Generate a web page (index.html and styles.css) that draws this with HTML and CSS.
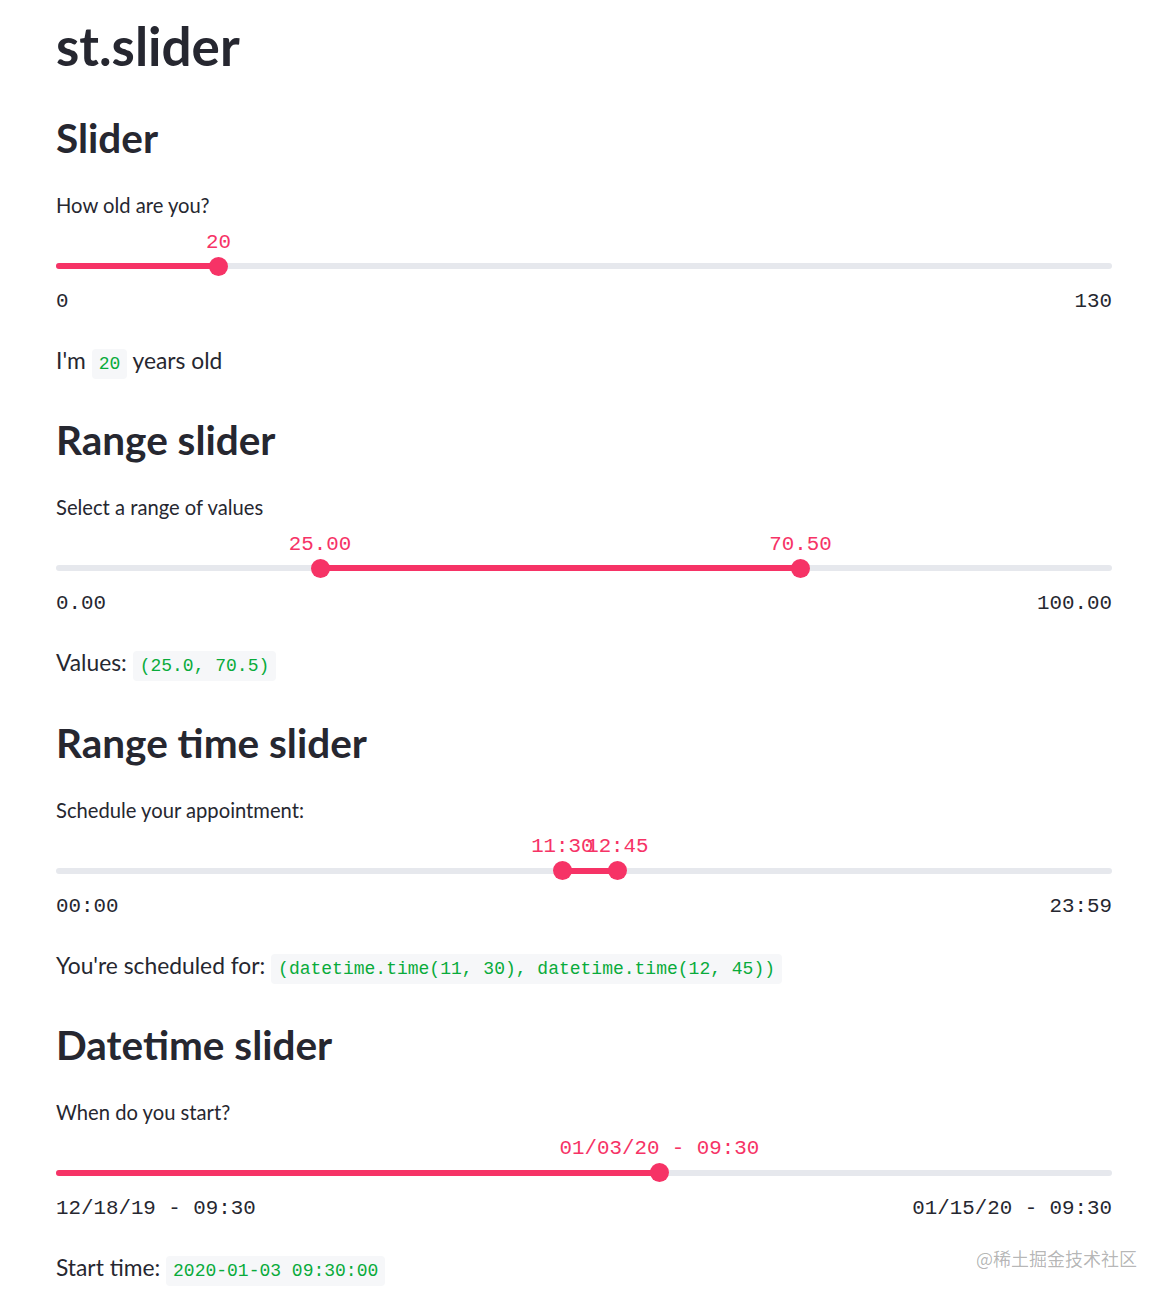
FILE: index.html
```html
<!DOCTYPE html>
<html lang="en">
<head>
  <meta charset="UTF-8" />
  <title>st.slider</title>
  <link rel="stylesheet" href="styles.css">
</head>
<body>

  <main class="page">
    <h1>st.slider</h1>

    <section class="block">
      <h2>Slider</h2>
      <div class="slider">
        <div class="slider-label">How old are you?</div>
        <div class="track">
          <div class="fill" style="left: 0%; width: 15.38%;"></div>
          <div class="thumb" style="left: 15.38%;"><span class="thumb-value">20</span></div>
        </div>
        <div class="ticks"><span>0</span><span>130</span></div>
      </div>
      <p class="result">I'm <code>20</code> years old</p>
    </section>

    <section class="block">
      <h2>Range slider</h2>
      <div class="slider">
        <div class="slider-label">Select a range of values</div>
        <div class="track">
          <div class="fill" style="left: 25%; width: 45.5%;"></div>
          <div class="thumb" style="left: 25%;"><span class="thumb-value">25.00</span></div>
          <div class="thumb" style="left: 70.5%;"><span class="thumb-value">70.50</span></div>
        </div>
        <div class="ticks"><span>0.00</span><span>100.00</span></div>
      </div>
      <p class="result">Values: <code>(25.0, 70.5)</code></p>
    </section>

    <section class="block">
      <h2>Range time slider</h2>
      <div class="slider">
        <div class="slider-label">Schedule your appointment:</div>
        <div class="track">
          <div class="fill" style="left: 47.95%; width: 5.21%;"></div>
          <div class="thumb" style="left: 47.95%;"><span class="thumb-value">11:30</span></div>
          <div class="thumb" style="left: 53.16%;"><span class="thumb-value">12:45</span></div>
        </div>
        <div class="ticks"><span>00:00</span><span>23:59</span></div>
      </div>
      <p class="result">You're scheduled for: <code>(datetime.time(11, 30), datetime.time(12, 45))</code></p>
    </section>

    <section class="block">
      <h2>Datetime slider</h2>
      <div class="slider">
        <div class="slider-label">When do you start?</div>
        <div class="track">
          <div class="fill" style="left: 0%; width: 57.14%;"></div>
          <div class="thumb" style="left: 57.14%;"><span class="thumb-value">01/03/20 - 09:30</span></div>
        </div>
        <div class="ticks"><span>12/18/19 - 09:30</span><span>01/15/20 - 09:30</span></div>
      </div>
      <p class="result">Start time: <code>2020-01-03 09:30:00</code></p>
    </section>
  </main>

  <div class="watermark">@稀土掘金技术社区</div>

</body>
</html>
```

FILE: styles.css
```css
body {
  margin: 0;
  font-family: Lato, 'Noto Sans', sans-serif;
  color: #262730;
  background: #fff;
}

.page {
  width: 1056px;
  padding: 15px 0 0 56px;
}

h1 {
  margin: 0;
  font-size: 53px;
  line-height: 62px;
  font-weight: 700;
}

h2 {
  margin: 0;
  font-size: 40.5px;
  line-height: 52px;
  font-weight: 700;
}

.block {
  margin-top: 35px;
}

.block + .block {
  margin-top: 34.3px;
}

.slider-label {
  margin-top: 29px;
  font-size: 20.2px;
  line-height: 24px;
}

.track {
  position: relative;
  margin-top: 46px;
  height: 6px;
  border-radius: 3px;
  background: #e6e8ed;
}

.fill {
  position: absolute;
  top: 0;
  height: 100%;
  border-radius: 3px;
  background: #f63366;
}

.thumb {
  position: absolute;
  top: 50%;
  width: 19px;
  height: 19px;
  margin: -9.5px 0 0 -9.5px;
  border-radius: 50%;
  background: #f63366;
}

.thumb-value {
  position: absolute;
  bottom: 20px;
  left: 50%;
  transform: translateX(-50%);
  white-space: pre;
  font-family: 'Liberation Mono', monospace;
  font-size: 20.8px;
  line-height: 26px;
  color: #f63366;
}

.ticks {
  display: flex;
  justify-content: space-between;
  margin-top: 20px;
  font-family: 'Liberation Mono', monospace;
  font-size: 20.8px;
  line-height: 26px;
  white-space: pre;
}

.result {
  margin: 29px 0 0;
  font-size: 22.8px;
  line-height: 32px;
}

code {
  font-family: 'Liberation Mono', monospace;
  font-size: 18px;
  color: #09ab3b;
  background: #f6f7f9;
  padding: 5px 7px;
  border-radius: 4px;
}

.watermark {
  position: absolute;
  top: 1245px;
  right: 33px;
  font-family: 'Noto Sans CJK SC', sans-serif;
  font-size: 18px;
  color: rgba(0, 0, 0, 0.3);
}
```
